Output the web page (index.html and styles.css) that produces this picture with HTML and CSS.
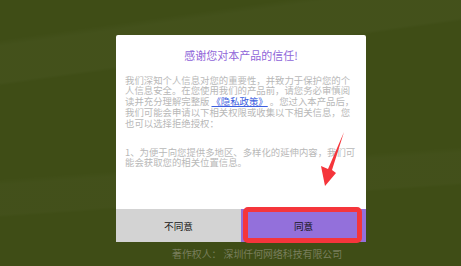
FILE: index.html
```html
<!DOCTYPE html>
<html lang="zh-CN">
<head>
<meta charset="utf-8">
<title>隐私政策</title>
<link rel="stylesheet" href="styles.css">
</head>
<body>
<div class="page">
  <div class="modal">
    <div class="content">
      <h1 class="title">感谢您对本产品的信任!</h1>
      <p class="para">我们深知个人信息对您的重要性，并致力于保护您的个人信息安全。在您使用我们的产品前，请您务必审慎阅读并充分理解完整版 <a class="link" href="#">《隐私政策》</a> 。您过入本产品后，我们可能会申请以下相关权限或收集以下相关信息，您也可以选择拒绝授权：</p>
      <p class="para para2">1、为便于向您提供多地区、多样化的延伸内容，我们可能会获取您的相关位置信息。</p>
    </div>
    <div class="actions">
      <div class="btn btn-no">不同意</div>
      <div class="btn btn-yes">同意<span class="highlight"></span></div>
    </div>
    <svg class="arrow" width="30" height="58" viewBox="0 0 30 58">
      <polygon points="26,2 14,40 18,43 7,56 3,36 10,39" fill="#f5353b"/>
    </svg>
  </div>
  <div class="footer">著作权人： 深圳仟何网络科技有限公司</div>
</div>
</body>
</html>
```
FILE: styles.css
```css
html, body {
  margin: 0;
  padding: 0;
}
body {
  width: 461px;
  height: 266px;
  overflow: hidden;
  background-color: #3f4d16;
  background-image:
    linear-gradient(172deg, rgba(255,255,255,0) 12%, rgba(255,255,255,0.025) 14%, rgba(255,255,255,0.025) 25%, rgba(255,255,255,0) 26%),
    linear-gradient(176deg, rgba(255,255,255,0) 60%, rgba(255,255,255,0.02) 62%, rgba(255,255,255,0.02) 72%, rgba(255,255,255,0) 73%);
  font-family: "Noto Sans CJK SC", "Noto Sans", sans-serif;
}
.page {
  padding: 35px 0 0 116px;
}
.modal {
  position: relative;
  width: 250px;
  height: 207px;
  background: #ffffff;
  border-radius: 2px 2px 0 0;
  display: flex;
  flex-direction: column;
}
.content {
  flex: 1;
  padding: 14px 9px 0;
}
.title {
  margin: 0;
  font-size: 11px;
  line-height: 12px;
  font-weight: normal;
  text-align: center;
  color: #8f66d9;
}
.para {
  margin: 13.6px 0 0;
  font-size: 9.4px;
  line-height: 10.8px;
  color: #b8b8b8;
}
.para2 {
  margin-top: 18px;
}
.link {
  color: #3b5ee0;
  text-decoration: underline;
}
.actions {
  display: flex;
  height: 33px;
}
.btn {
  flex: 1;
  display: flex;
  align-items: center;
  justify-content: center;
  font-size: 9.6px;
  color: #151515;
  position: relative;
}
.btn-no {
  background: #d3d3d3;
}
.btn-yes {
  background: #9370db;
}
.highlight {
  position: absolute;
  left: 2px;
  top: -2px;
  width: 119px;
  height: 36px;
  box-sizing: border-box;
  border: 5px solid #f5353b;
  border-radius: 5px;
}
.arrow {
  position: absolute;
  left: 202px;
  top: 95px;
}
.footer {
  margin: 6px 0 0 56px;
  font-size: 9.9px;
  line-height: 12px;
  color: #787e5c;
  white-space: nowrap;
}
```
